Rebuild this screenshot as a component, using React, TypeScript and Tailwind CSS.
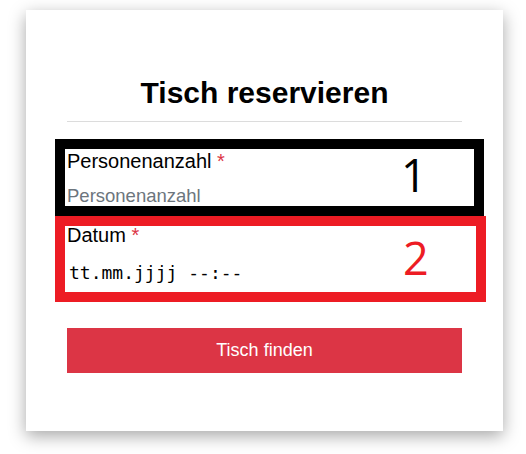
export default function App() {
  return (
    <div className="w-[526px] h-[454px] bg-white overflow-hidden pt-[10px] pl-[26px] font-['Liberation_Sans',Arial,sans-serif]">
      <div className="w-[477px] h-[421px] bg-white shadow-[0_5px_16px_rgba(0,0,0,0.35)] flex flex-col">
        <h2 className="pt-[65px] text-center text-[30px] leading-[36px] font-bold text-black">
          Tisch reservieren
        </h2>
        <div className="mt-[10px] mx-[41px] h-px bg-[#dcdcdc]" />

        <div className="relative mt-[17px] ml-[29px] w-[429px] h-[77px] border-[10px] border-black pl-[2px] pt-[1px] flex flex-col">
          <div className="text-[20px] leading-[23px] text-black">
            Personenanzahl <span className="text-[#dc3545]">*</span>
          </div>
          <div className="mt-[12px] text-[18.5px] leading-[21px] text-[#6c757d]">Personenanzahl</div>
          <span className="absolute left-[336px] top-[3px] text-[45px] leading-[45px] text-black font-['Open_Sans',sans-serif]">
            1
          </span>
        </div>

        <div className="relative ml-[29px] w-[431px] h-[86px] border-[10px] border-[#ed1c24] pl-[2px] pt-[1px] flex flex-col">
          <div className="text-[20px] leading-[16px] text-black">
            Datum <span className="text-[#dc3545]">*</span>
          </div>
          <div className="mt-[19px] pl-[2px] text-[18px] leading-[21px] text-black font-['DejaVu_Sans_Mono',monospace]">
            tt.mm.jjjj --:--
          </div>
          <span className="absolute left-[338px] top-[9px] text-[45px] leading-[45px] text-[#ed1c24] font-['Open_Sans',sans-serif]">
            2
          </span>
        </div>

        <button className="mt-[26px] mx-[41px] h-[45px] bg-[#dc3545] text-white text-[18px] leading-[21px] flex items-center justify-center">
          Tisch finden
        </button>
      </div>
    </div>
  );
}
